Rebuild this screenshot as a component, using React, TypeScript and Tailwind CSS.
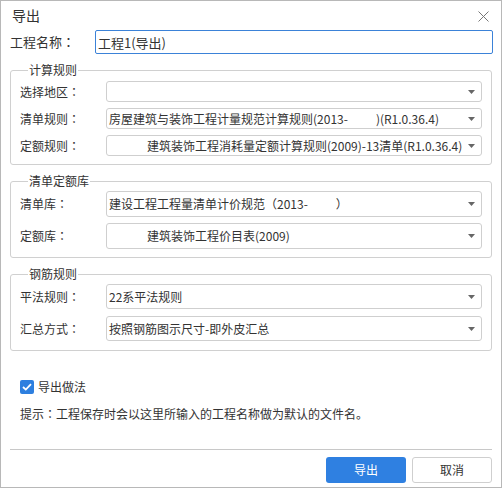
import React, { useState } from 'react'

const font = { fontFamily: '"Noto Sans CJK SC", "Noto Sans", sans-serif' }

// full-width colon centred in its box, as the TC cut draws it
const Colon = () => <span style={{ fontFamily: '"Noto Sans CJK TC", sans-serif' }}>：</span>

function Arrow() {
  return (
    <svg width="7" height="4" viewBox="0 0 7 4" className="shrink-0">
      <path d="M0 0 H7 L3.5 4 Z" fill="#666" />
    </svg>
  )
}

function Select({ h, children }: { h: string; children?: React.ReactNode }) {
  return (
    <div className={`flex flex-1 items-center justify-between rounded-[3px] border border-[#cfcfcf] bg-white pl-[2px] pr-[6px] ${h}`}>
      <span className="whitespace-pre text-[12px] text-[#333]">{children}</span>
      <Arrow />
    </div>
  )
}

function Row({ label, h, children }: { label: string; h: string; children?: React.ReactNode }) {
  return (
    <div className="flex items-center">
      <span className="w-[86px] shrink-0 text-[12px] text-[#333]">{label}<Colon /></span>
      <Select h={h}>{children}</Select>
    </div>
  )
}

function Group({ title, className, children }: { title: string; className: string; children: React.ReactNode }) {
  return (
    <fieldset className={`mx-[9px] rounded-[3px] border border-[#d0d0d0] pl-[9px] pr-[9px] ${className}`}>
      <legend className="ml-[8px] px-[1px] text-[12px] leading-[16px] text-[#333]">{title}</legend>
      {children}
    </fieldset>
  )
}

const Gap = () => <span className="inline-block w-[28px]" />
const Lead = () => <span className="inline-block w-[38px]" />

export default function App() {
  const [withMethod, setWithMethod] = useState(true)
  const [name, setName] = useState('工程1(导出)')

  return (
    <div style={font} className="flex h-[488px] w-[502px] flex-col border border-[#b8b8b8] bg-white">
      <div className="flex h-[28px] items-center justify-between pl-[11px] pr-[12px]">
        <span className="text-[14px] text-[#333]">导出</span>
        <svg width="11" height="11" viewBox="0 0 11 11" className="mt-[2px]">
          <path d="M0.5 0.5 L10.5 10.5 M10.5 0.5 L0.5 10.5" stroke="#777" strokeWidth="1" />
        </svg>
      </div>

      <div className="mt-[1px] flex items-center pl-[9px] pr-[8px]">
        <span className="w-[85px] shrink-0 text-[13px] text-[#333]">工程名称<Colon /></span>
        <input
          value={name}
          onChange={e => setName(e.target.value)}
          className="h-[24px] flex-1 rounded-[2px] border border-[#3b82d8] px-[2px] text-[13px] text-[#333] outline-none"
        />
      </div>

      <Group title="计算规则" className="mt-[8px] pb-[8px]">
        <div className="flex flex-col gap-[6px] pt-[3px]">
          <Row label="选择地区" h="h-[21px]" />
          <Row label="清单规则" h="h-[21px]">
            房屋建筑与装饰工程计量规范计算规则(2013-<Gap />)(R1.0.36.4)
          </Row>
          <Row label="定额规则" h="h-[21px]">
            <Lead />建筑装饰工程消耗量定额计算规则(2009)-13清单(R1.0.36.4)
          </Row>
        </div>
      </Group>

      <Group title="清单定额库" className="mt-[8px] pb-[8px]">
        <div className="flex flex-col gap-[6px] pt-[2px]">
          <Row label="清单库" h="h-[26px]">
            建设工程工程量清单计价规范（2013-<Gap />）
          </Row>
          <Row label="定额库" h="h-[26px]">
            <Lead />建筑装饰工程价目表(2009)
          </Row>
        </div>
      </Group>

      <Group title="钢筋规则" className="mt-[8px] pb-[9px]">
        <div className="flex flex-col gap-[7px] pt-[2px]">
          <Row label="平法规则" h="h-[25px]">22系平法规则</Row>
          <Row label="汇总方式" h="h-[25px]">按照钢筋图示尺寸-即外皮汇总</Row>
        </div>
      </Group>

      <label className="mt-[27px] flex cursor-pointer items-center gap-[4px] pl-[19px]">
        <span
          onClick={() => setWithMethod(v => !v)}
          className={`flex h-[14px] w-[14px] items-center justify-center rounded-[2px] ${withMethod ? 'bg-[#2d7fdf]' : 'border border-[#999] bg-white'}`}
        >
          {withMethod && (
            <svg width="10" height="8" viewBox="0 0 10 8">
              <path d="M1 4 L3.8 6.6 L9 1.2" stroke="#fff" strokeWidth="1.8" fill="none" />
            </svg>
          )}
        </span>
        <span className="text-[12px] text-[#333]">导出做法</span>
      </label>

      <p className="mt-[9px] pl-[19px] text-[12px] text-[#333]">
        提示<Colon />工程保存时会以这里所输入的工程名称做为默认的文件名。
      </p>

      <div className="mx-[9px] mt-[26px] border-t border-[#c8c8c8]" />

      <div className="mt-[7px] flex justify-end gap-[6px] pr-[9px]">
        <button className="h-[26px] w-[80px] rounded-[3px] bg-[#2f80e1] text-[12px] text-white">导出</button>
        <button className="h-[26px] w-[80px] rounded-[3px] border border-[#cfcfcf] bg-white text-[12px] text-[#333]">取消</button>
      </div>
    </div>
  )
}
